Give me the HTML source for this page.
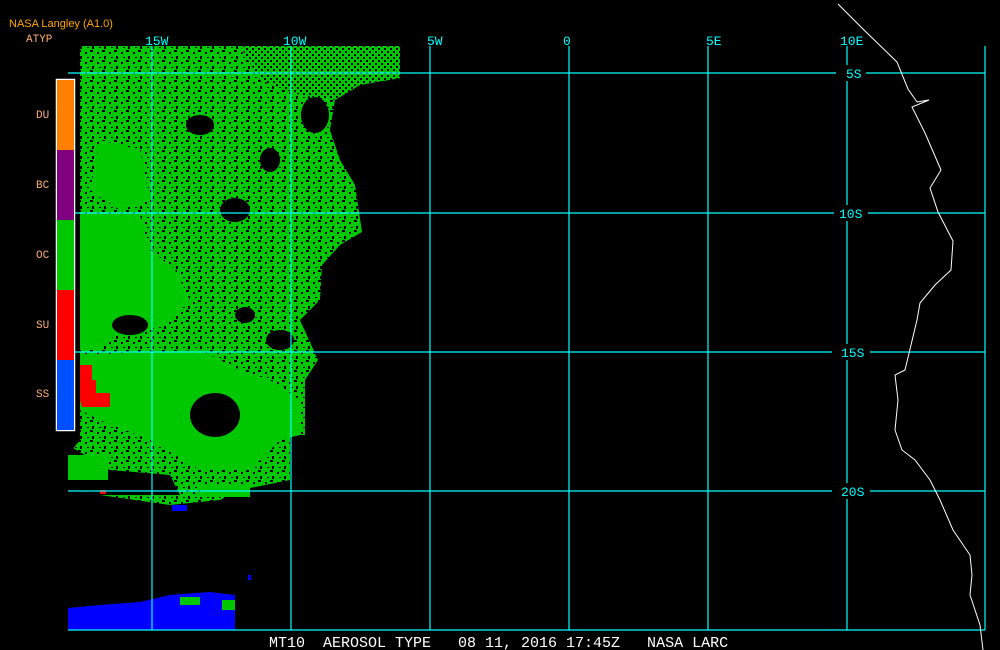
<!DOCTYPE html>
<html><head><style>
html,body{margin:0;padding:0;background:#000;width:1000px;height:650px;overflow:hidden}
svg{display:block}
text{font-family:"Liberation Mono",monospace}
</style></head><body>
<svg width="1000" height="650" viewBox="0 0 1000 650" xmlns="http://www.w3.org/2000/svg">
<defs>
<pattern id="spk" width="12" height="10" patternUnits="userSpaceOnUse">
<rect width="12" height="10" fill="#00c800"/>
<rect x="1" y="2" width="2" height="2" fill="#000"/>
<rect x="6" y="0" width="3" height="2" fill="#000"/>
<rect x="8" y="6" width="2" height="3" fill="#000"/>
<rect x="3" y="7" width="2" height="1" fill="#000"/>
</pattern>
<pattern id="spk2" width="6" height="6" patternUnits="userSpaceOnUse">
<rect width="6" height="6" fill="#00c800"/>
<rect x="0" y="0" width="2" height="2" fill="#000"/>
<rect x="3" y="3" width="2" height="2" fill="#000"/>
</pattern>
</defs>
<!-- data region -->
<polygon fill="url(#spk)" points="80,46 400,46 400,78 360,85 335,100 330,130 340,160 355,185 362,232 340,245 322,265 320,300 300,320 318,360 305,380 305,435 290,435 290,480 240,490 220,500 170,505 100,495 68,490 68,455 80,440 80,46"/>
<polygon fill="url(#spk2)" points="240,46 400,46 400,78 360,85 335,100 300,95 260,80"/>
<polygon fill="#00c800" points="80,215 140,215 150,250 175,270 190,300 170,320 150,330 120,330 100,350 80,350"/>
<polygon fill="#00c800" points="80,355 200,350 240,370 270,380 300,400 300,435 280,440 250,470 200,470 150,440 100,420 80,410"/>
<polygon fill="#00c800" points="100,140 140,150 150,200 120,210 90,190"/>
<!-- black holes -->
<ellipse cx="215" cy="415" rx="25" ry="22" fill="#000"/>
<ellipse cx="130" cy="325" rx="18" ry="10" fill="#000"/>
<ellipse cx="280" cy="340" rx="14" ry="10" fill="#000"/>
<ellipse cx="245" cy="315" rx="10" ry="8" fill="#000"/>
<ellipse cx="235" cy="210" rx="15" ry="12" fill="#000"/>
<ellipse cx="200" cy="125" rx="14" ry="10" fill="#000"/>
<ellipse cx="315" cy="115" rx="14" ry="18" fill="#000"/>
<ellipse cx="270" cy="160" rx="10" ry="12" fill="#000"/>
<polygon fill="#000" points="68,445 110,470 170,475 180,495 100,495 68,490"/>
<rect x="68" y="455" width="40" height="25" fill="#00c800"/>
<rect x="200" y="485" width="50" height="12" fill="#00c800"/>
<!-- red -->
<polygon fill="#ff0000" points="80,365 92,365 92,380 96,380 96,393 110,393 110,407 82,407 80,400"/>
<rect x="100" y="490" width="6" height="4" fill="#ff0000"/>
<!-- blue -->
<rect x="172" y="505" width="15" height="6" fill="#0000ff"/>
<polygon fill="#0000ff" points="68,608 100,605 140,602 170,595 210,592 235,595 235,630 68,630"/>
<rect x="180" y="597" width="20" height="8" fill="#00c800"/>
<rect x="222" y="600" width="13" height="10" fill="#00c800"/>
<rect x="248" y="575" width="3" height="5" fill="#0000ff"/>
<!-- grid -->
<g stroke="#00ffff" stroke-width="1.2" fill="none">
<line x1="152" y1="46" x2="152" y2="630"/>
<line x1="291" y1="46" x2="291" y2="630"/>
<line x1="430" y1="46" x2="430" y2="630"/>
<line x1="569" y1="46" x2="569" y2="630"/>
<line x1="708" y1="46" x2="708" y2="630"/>
<line x1="847" y1="46" x2="847" y2="630"/>
<line x1="985" y1="46" x2="985" y2="630"/>
<line x1="68" y1="73" x2="985" y2="73"/>
<line x1="68" y1="213" x2="985" y2="213"/>
<line x1="68" y1="352" x2="985" y2="352"/>
<line x1="68" y1="491" x2="985" y2="491"/>
<line x1="68" y1="630" x2="985" y2="630"/>
</g>
<g fill="#000">
<rect x="836" y="65" width="30" height="16"/>
<rect x="834" y="205" width="34" height="16"/>
<rect x="832" y="344" width="38" height="16"/>
<rect x="832" y="483" width="38" height="16"/>
</g>
<g fill="#00ffff" font-size="13">
<text x="145" y="45">15W</text>
<text x="283" y="45">10W</text>
<text x="427" y="45">5W</text>
<text x="563" y="45">0</text>
<text x="706" y="45">5E</text>
<text x="840" y="45">10E</text>
<text x="846" y="78">5S</text>
<text x="839" y="218">10S</text>
<text x="841" y="357">15S</text>
<text x="841" y="496">20S</text>
</g>
<!-- coastline -->
<polyline fill="none" stroke="#fff" stroke-width="1" points="838,4 865,31 897,62 908,89 917,102 929,100 912,107 925,133 941,170 930,188 938,212 953,241 951,270 935,285 920,303 917,320 905,370 895,375 898,400 895,430 902,450 915,460 930,480 940,500 953,530 970,555 972,575 970,595 980,625 983,650"/>
<!-- colorbar -->
<rect x="56.5" y="79.5" width="18" height="351" fill="none" stroke="#fff" stroke-width="1.5"/>
<rect x="57" y="80" width="17" height="70" fill="#ff8000"/>
<rect x="57" y="150" width="17" height="70" fill="#800080"/>
<rect x="57" y="220" width="17" height="70" fill="#00c800"/>
<rect x="57" y="290" width="17" height="70" fill="#ff0000"/>
<rect x="57" y="360" width="17" height="70" fill="#0050ff"/>
<g fill="#ffb070" font-size="11" style="font-family:'Liberation Sans',sans-serif">
<text x="36" y="118">DU</text>
<text x="36" y="188">BC</text>
<text x="36" y="258">OC</text>
<text x="36" y="328">SU</text>
<text x="36" y="397">SS</text>
<text x="26" y="42">ATYP</text>
</g>
<text x="9" y="27" fill="#ffa500" font-size="11" style="font-family:'Liberation Sans',sans-serif">NASA Langley (A1.0)</text>
<text x="269" y="647" fill="#fff" font-size="15" xml:space="preserve">MT10  AEROSOL TYPE   08 11, 2016 17:45Z   NASA LARC</text>
</svg>
</body></html>
